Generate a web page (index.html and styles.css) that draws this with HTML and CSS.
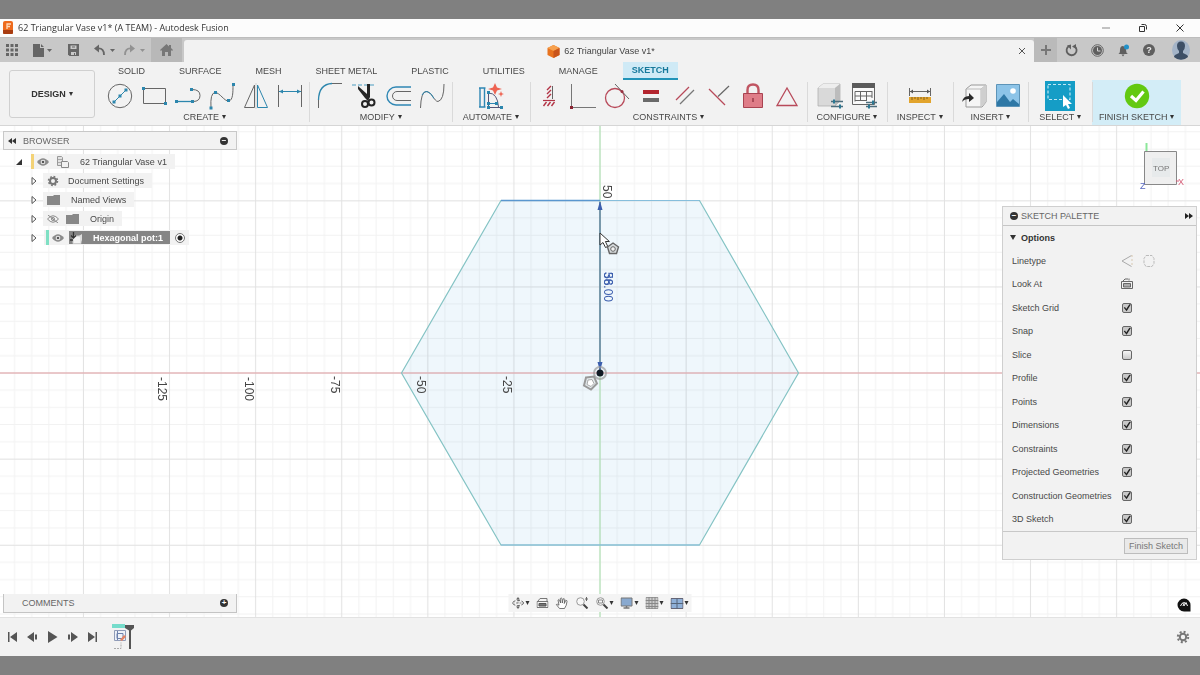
FILE: index.html
```html
<!DOCTYPE html>
<html lang="en">
<head>
<meta charset="utf-8">
<title>62 Triangular Vase v1* (A TEAM) - Autodesk Fusion</title>
<link rel="stylesheet" href="styles.css">
</head>
<body>
<div class="app">
  <header class="titlebar">
    <svg class="app-logo" width="12" height="14" viewBox="0 0 12 14"><rect x="1" y="0" width="10" height="13" rx="2" fill="#ee6a1c"/><path d="M1 9h10v3q0 1-1 1H2q-1 0-1-1z" fill="#a83c10"/><path d="M5 8V3h4M5 5.500h3" stroke="#ffd9b8" stroke-width="1.300" fill="none"/></svg>
    <span class="app-title">62 Triangular Vase v1* (A TEAM) - Autodesk Fusion</span>
    <div class="window-buttons">
      <button aria-label="Minimize"><svg width="10" height="10" viewBox="0 0 10 10"><path d="M1 5h8" stroke="#888"/></svg></button>
      <button aria-label="Restore"><svg width="10" height="10" viewBox="0 0 10 10"><path d="M1.500 3.500h5v5h-5zM3.500 1.500h3q2 0 2 2v3" fill="none" stroke="#333"/></svg></button>
      <button aria-label="Close"><svg width="10" height="10" viewBox="0 0 10 10"><path d="M1.500 1.500l7 7m0-7l-7 7" stroke="#333"/></svg></button>
    </div>
  </header>

  <div class="tabstrip">
    <div class="quick">
      <button aria-label="Data panel"><svg width="12" height="12" viewBox="0 0 12 12" fill="#666"><path d="M0 0h3v3H0zM4.500 0h3v3h-3zM9 0h3v3H9zM0 4.500h3v3H0zM4.500 4.500h3v3h-3zM9 4.500h3v3H9zM0 9h3v3H0zM4.500 9h3v3h-3zM9 9h3v3H9z"/></svg></button>
      <button aria-label="File"><svg width="19" height="13" viewBox="0 0 19 13" fill="#666"><path d="M0 0h7v4h4v9H0zM8 0l3 3H8z"/><path d="M14 5h5l-2.500 3z"/></svg></button>
      <button aria-label="Save"><svg width="11" height="12" viewBox="0 0 11 12"><path d="M0 0h11v12H1.500L0 10.500z" fill="#666"/><path d="M2.500 1.500h6V5h-6z" fill="#c9c9c9"/><path d="M3 8h5v3H3z" fill="#c9c9c9"/><path d="M4 2.500h3v1H4zM6 9h1v2H6z" fill="#666"/></svg></button>
      <button class="undo" aria-label="Undo"><svg width="21" height="12" viewBox="0 0 21 12"><path d="M4 4.500q6-.5 6 6.500" fill="none" stroke="#666" stroke-width="1.800"/><path d="M0 4.500L5 .5v8z" fill="#666"/><path d="M16 5h5l-2.500 3z" fill="#666"/></svg></button>
      <button aria-label="Redo"><svg width="21" height="12" viewBox="0 0 21 12" fill="#929292"><path d="M11 4.500L6 .5v8z"/><path d="M7 4.500q-6-.5-6 6.500" fill="none" stroke="#929292" stroke-width="1.800"/><path d="M16 5h5l-2.500 3z"/></svg></button>
    </div>
    <button class="home" aria-label="Home"><svg width="13" height="12" viewBox="0 0 13 12" fill="#777"><path d="M6.500 0L0 6l1 1 1-1v6h3V8h3v4h3V6l1 1 1-1-2-2V1H9v1.500z"/></svg></button>
    <div class="doc-tab">
      <div class="doc-name"><svg width="13" height="13" viewBox="0 0 13 13"><path d="M6.500 0L12.500 3v7l-6 3-6-3V3z" fill="#e8731f"/><path d="M6.500 0l6 3-6 3-6-3z" fill="#f7a14e"/><path d="M6.500 6l6-3v7l-6 3z" fill="#c9541b"/></svg><span>62 Triangular Vase v1*</span></div>
      <button class="doc-close" aria-label="Close document"><svg width="8" height="8" viewBox="0 0 8 8"><path d="M1 1l6 6m0-6L1 7" stroke="#555"/></svg></button>
    </div>
    <button class="new-tab" aria-label="New design"><svg width="10" height="10" viewBox="0 0 10 10"><path d="M5 0v10M0 5h10" stroke="#777" stroke-width="2"/></svg></button>
    <div class="status">
      <button aria-label="Extensions"><svg width="13" height="13" viewBox="0 0 13 13"><path d="M4 2a5 5 0 1 0 5.500.2" fill="none" stroke="#5f5f5f" stroke-width="1.800"/><path d="M2 1.500l4-1v5zM11 0v5L7 2.500z" fill="#5f5f5f"/></svg></button>
      <button aria-label="Job status"><svg width="13" height="13" viewBox="0 0 13 13"><circle cx="6.500" cy="6.500" r="5.800" fill="none" stroke="#666"/><circle cx="6.500" cy="6.500" r="4.500" fill="#5f5f5f"/><path d="M6.500 3.500v3.500h3" stroke="#d5d5d5" fill="none"/></svg></button>
      <button aria-label="Notifications"><svg width="13" height="13" viewBox="0 0 13 13"><path d="M6 2q-3 0-3 4T1 10h10q-2-1-2-4T6 2zM4.500 10.500h3L6 12.500z" fill="#5f5f5f"/><circle cx="9.500" cy="3" r="2.500" fill="#2191c9"/></svg></button>
      <button class="help" aria-label="Help">?</button>
      <button class="account" aria-label="Account"><svg width="18" height="20" viewBox="0 0 18 20"><ellipse cx="9" cy="10" rx="9" ry="10" fill="#a4b4c8"/><path d="M9 1.500q4 0 4 4.500 0 3-2 5v2l4 2q1 1 1 2-3 2.800-7 2.800T2 17q0-1 1-2l4-2v-2Q5 9 5 6q0-4.500 4-4.500z" fill="#3d4f66"/></svg></button>
    </div>
  </div>

  <div class="ribbon">
    <button class="workspace">DESIGN <i class="caret"></i></button>
    <div class="ribbon-main">
      <nav class="ribbon-tabs">
        <button>SOLID</button><button>SURFACE</button><button>MESH</button><button>SHEET METAL</button><button>PLASTIC</button><button>UTILITIES</button><button>MANAGE</button><button class="active">SKETCH</button>
      </nav>
      <div class="groups">
        <section class="group g-create">
          <div class="tools">
            <svg viewBox="0 0 28 28"><circle cx="14" cy="14" r="11.700" fill="none" stroke="#666"/><path d="M8 20L20 8" stroke="#2c86ad"/><path d="M6.500 18.500h3v3h-3zM12.500 12.500h3v3h-3zM18.500 6.500h3v3h-3z" fill="#2c86ad"/></svg>
            <svg viewBox="0 0 28 28"><path d="M3.500 6.500h22v15h-22z" fill="none" stroke="#666"/><path d="M2 5h3v3H2zM24 20h3v3h-3z" fill="#2c86ad"/></svg>
            <svg viewBox="0 0 28 28"><path d="M2 19.500h17" stroke="#2c86ad" stroke-width="1.300"/><path d="M18 7.500q8 0 8 6t-7 6" fill="none" stroke="#666"/><path d="M1 18h3v3H1zM17 18h3v3h-3zM16 6h3v3h-3z" fill="#2c86ad"/></svg>
            <svg viewBox="0 0 28 28"><path d="M3 26Q2 11 7 10.500c5 0 9 9 14 8.500 4-1 4-9 4-16" fill="none" stroke="#666"/><path d="M1.500 24.500h3v3h-3zM6 9h3v3H6zM19 17h3v3h-3zM24 1h3v3h-3z" fill="#2c86ad"/></svg>
            <svg viewBox="0 0 28 28"><path d="M12.500 3v22.500H2.500z" fill="none" stroke="#666"/><path d="M15.500 3v22.500h10z" fill="none" stroke="#2c86ad"/><path d="M14 1v26" stroke="#bbb" stroke-width=".6"/></svg>
            <svg viewBox="0 0 28 28"><path d="M2.500 3v22M25.500 3v22" stroke="#666"/><path d="M3 9.500h22" stroke="#2c86ad"/><path d="M3 9.500l4-2v4zM25 9.500l-4-2v4z" fill="#2c86ad"/></svg>
          </div><button class="label">CREATE<i class="caret"></i></button>
        </section>
        <section class="group g-modify">
          <div class="tools">
            <svg viewBox="0 0 28 28"><path d="M2.500 18v8M16 1.500h10" stroke="#666"/><path d="M2.500 18Q3 2 16 1.500" fill="none" stroke="#2c86ad" stroke-width="1.300"/></svg>
            <svg viewBox="0 0 28 28"><path d="M2 3h24" stroke="#4a9cc0" stroke-dasharray="4 2"/><path d="M17 2h3v13l-2 4-3-3L8 7V4l9 8z" fill="#252525"/><circle cx="15" cy="22" r="3" fill="none" stroke="#252525" stroke-width="2"/><circle cx="21.500" cy="20.500" r="3" fill="none" stroke="#252525" stroke-width="2"/></svg>
            <svg viewBox="0 0 28 28"><path d="M27 5H12a9 9 0 0 0 0 18h15" fill="none" stroke="#2f87b4" stroke-width="1.400"/><path d="M27 9.500H13a4.500 4.500 0 0 0 0 9h14" fill="none" stroke="#666"/></svg>
            <svg viewBox="0 0 28 28"><path d="M2.500 26Q3 10 8 9.500c6 0 8 10 12 10Q26 18 26 2" fill="none" stroke="#666"/><path d="M4 13q2-4 5-3.500 4 1 7 7" fill="none" stroke="#2c86ad"/></svg>
          </div><button class="label">MODIFY<i class="caret"></i></button>
        </section>
        <section class="group g-automate">
          <div class="tools">
            <svg viewBox="0 0 28 28"><path d="M3 6v19M7.500 6v19M2 6h6.500M2 25h6.500" stroke="#2f87b4" stroke-width="1.400"/><path d="M11 25.500h14M11.500 10v15.500M11.500 11q9 0 10 14" fill="none" stroke="#557"/><path d="M12 21.500h8" stroke="#2f87b4"/><path d="M10 9h3v3h-3zM10 24h3v3h-3zM10 20h3v3h-3zM23 24h3v3h-3zM18 20h3v3h-3z" fill="#2c86ad"/><path d="M18 1l2 4.500L25 7l-5 1.500L18 13l-2-4.500L11 7l5-1.500zM24 9l.8 2.200L27 12l-2.200.8L24 15l-.8-2.200L21 12l2.200-.8z" fill="#ee6352"/></svg>
          </div><button class="label">AUTOMATE<i class="caret"></i></button>
        </section>
        <section class="group g-constraints">
          <div class="tools">
            <svg viewBox="0 0 28 28"><path d="M17.500 4v13" stroke="#666"/><path d="M12 8l4-4M12 12l4-4M12 16l4-4M8.500 24l3-4M12.500 24l3-4M16.500 24l3-4" stroke="#b23446" stroke-width="1.400"/><path d="M8 18.500h12" stroke="#b23446" stroke-width="1.200"/></svg>
            <svg viewBox="0 0 28 28"><path d="M2.500 2v23.500H27" fill="none" stroke="#777"/><path d="M1 24h3v3H1z" fill="#8c2634"/></svg>
            <svg viewBox="0 0 28 28"><circle cx="12" cy="16" r="9.500" fill="none" stroke="#b84a5a" stroke-width="1.300"/><path d="M12 2l14 15" stroke="#666"/><circle cx="19" cy="9.500" r="1.500" fill="#9c3040"/></svg>
            <svg viewBox="0 0 28 28"><path d="M6 8h16v4H6z" fill="#b3252e"/><path d="M6 16h16v4H6z" fill="#6a6a6a"/></svg>
            <svg viewBox="0 0 28 28"><path d="M5 18L18 5" stroke="#b84a5a" stroke-width="1.200"/><path d="M9 22L23 8" stroke="#777" stroke-width="1.200"/></svg>
            <svg viewBox="0 0 28 28"><path d="M4 7l16 16" stroke="#b84a5a" stroke-width="1.200"/><path d="M13 14.500L24 4" stroke="#666" stroke-width="1.200"/></svg>
            <svg viewBox="0 0 28 28"><path d="M8.500 12V8q0-5.500 5.500-5.500T19.500 8v4" fill="none" stroke="#c05562" stroke-width="2.400"/><path d="M4.500 11.500h19v14h-19z" fill="#df7d88" stroke="#a94351"/><path d="M14 16v4" stroke="#983b48" stroke-width="1.500"/></svg>
            <svg viewBox="0 0 28 28"><path d="M14 6L24 23.500H4z" fill="none" stroke="#b84a5a" stroke-width="1.300"/></svg>
          </div><button class="label">CONSTRAINTS<i class="caret"></i></button>
        </section>
        <section class="group g-configure">
          <div class="tools">
            <svg viewBox="0 0 28 28"><path d="M2 6l5-4h17v17l-5 5H2z" fill="#d9d9d9" stroke="#aaa" stroke-width=".7"/><path d="M2 6l5-4h17l-5 4z" fill="#eee"/><path d="M19 6l5-4v17l-5 5z" fill="#bcbcbc"/><path d="M15 19.500h12M15 24.500h12" stroke="#4d6d7c" stroke-width="1.500"/><path d="M18 17.500v4M24 22.500v4" stroke="#2c7893" stroke-width="2"/></svg>
            <svg viewBox="0 0 28 28"><path d="M2.500 2.500h22v20h-22z" fill="#fafafa" stroke="#666"/><path d="M2 1h23v5H2z" fill="#5b5b5b"/><path d="M5 9.500h17M5 14h17M5 18.500h11M5 9.500v10M10.500 9v10M16.500 9v10M22 9v7" stroke="#666"/><path d="M16 20.500h11M16 24.500h11" stroke="#4d6d7c" stroke-width="1.500"/><path d="M23 18.500v4M19 22.500v4" stroke="#2c7893" stroke-width="2"/></svg>
          </div><button class="label">CONFIGURE<i class="caret"></i></button>
        </section>
        <section class="group g-inspect">
          <div class="tools">
            <svg viewBox="0 0 28 28"><path d="M3.500 6v8M24.500 6v8M4 9.500h20" stroke="#666"/><path d="M4 9.500l3-2v4zM24 9.500l-3-2v4z" fill="#555"/><path d="M3 15h22v6H3z" fill="#e2a42c"/><path d="M6 15v3M9 15v2M12 15v3M15 15v2M18 15v3M21 15v2" stroke="#87611b"/></svg>
          </div><button class="label">INSPECT<i class="caret"></i></button>
        </section>
        <section class="group g-insert">
          <div class="tools">
            <svg viewBox="0 0 28 28"><path d="M6 7l5-4h15v17l-4 5H6z" fill="#f5f5f5" stroke="#999"/><path d="M6 7h15v18M21 7l5-4" fill="none" stroke="#bbb"/><path d="M21 7l5-4v17l-5 5z" fill="#cfcfcf"/><path d="M2 20q1-6 7-6v-3l5 5-5 4v-3q-5 0-7 3z" fill="#2a2a2a"/></svg>
            <svg viewBox="0 0 28 28"><path d="M2.500 2.500h23v22h-23z" fill="#8dc4e8" stroke="#5d94b8"/><circle cx="19" cy="9" r="2.800" fill="#fff"/><path d="M3 20l7-8 6 8 3-3 6 5v2H3z" fill="#2f78a6"/></svg>
          </div><button class="label">INSERT<i class="caret"></i></button>
        </section>
        <section class="group g-select">
          <div class="tools">
            <svg class="big" viewBox="0 0 30 30"><path d="M0 0h30v30H0z" fill="#159dc6"/><path d="M3 3.500h22v15H3z" fill="none" stroke="#bfe7f4" stroke-width="1.200" stroke-dasharray="3 2"/><path d="M18 14v12l3-2 2 4 2-1-2-4h4z" fill="#fff"/></svg>
          </div><button class="label">SELECT<i class="caret"></i></button>
        </section>
        <section class="group g-finish">
          <div class="tools">
            <svg viewBox="0 0 28 28"><circle cx="14" cy="14" r="12.200" fill="#63c911"/><path d="M8 14l5 4.500L20.500 9.500" fill="none" stroke="#fff" stroke-width="3.200"/></svg>
          </div><button class="label">FINISH SKETCH<i class="caret"></i></button>
        </section>
      </div>
    </div>
  </div>

  <main class="canvas">
    <svg class="drawing" viewBox="0 0 1200 491" preserveAspectRatio="xMidYMid slice">
      <defs>
        <pattern id="grid" x="557" y="204" width="86.100" height="86.100" patternUnits="userSpaceOnUse">
          <path d="M8.500 0v86.100M25.700 0v86.100M60.200 0v86.100M77.400 0v86.100M0 8.500h86.100M0 25.700h86.100M0 60.200h86.100M0 77.400h86.100" stroke="#f2f2f2"/>
          <path d="M43 0v86.100M0 43h86.100" stroke="#e1e1e1"/>
        </pattern>
      </defs>
      <path d="M401.500 247L501 74.500H699.500L798.500 247 699.500 419H501z" fill="#eff7fc"/>
      <rect class="grid-layer" width="1200" height="491" fill="url(#grid)"/>
      <path d="M0 247H1200" stroke="#e39fa3"/>
      <path d="M600 0V491" stroke="#a9e3ad"/>
      <path d="M401.500 247L501 74.500H699.500L798.500 247 699.500 419H501z" fill="none" stroke="#84c3c4" stroke-width="1.200"/>
      <path d="M501 74.500H600" stroke="#5a97cf" stroke-width="1.500"/><path d="M600 74.500H699.500M501 419H699.500" stroke="#86bedc" stroke-width="1.200"/>
      <path d="M600 76V246" stroke="#5f7f9f" stroke-width="1.500"/>
      <path d="M600 75l-2.500 9h5zM600 245l-2.500-9h5z" fill="#3c5fae"/>
      <g class="ruler">
        <text transform="translate(158 251) rotate(90)">-125</text>
        <text transform="translate(245 251) rotate(90)">-100</text>
        <text transform="translate(331 250) rotate(90)">-75</text>
        <text transform="translate(417 250) rotate(90)">-50</text>
        <text transform="translate(503 250) rotate(90)">-25</text>
        <text transform="translate(603 59) rotate(90)">50</text>
      </g>
      <g class="dimension">
        <text transform="translate(604 146) rotate(90)">58.00</text>
        <text transform="translate(604 146) rotate(90)">36</text>
      </g>
      <circle cx="600" cy="247" r="6" fill="none" stroke="#9a9a9a" stroke-width="2" opacity=".7"/><circle cx="600" cy="247" r="3.500" fill="#111a24"/>
      <path d="M586 251.500l8-1 3 7-6 6-7-4z" fill="#e4eaed" stroke="#999" stroke-width="2"/><path d="M588 254l4-.5 2 4-3 3-4-2z" fill="#fff" stroke="#aaa"/>
      <path d="M600 107v12l3-2.500 2.500 5 2.300-1-2.400-5h4z" fill="#fff" stroke="#333"/>
      <path d="M613 117l5.500 4-2 6.500h-7l-2-6.500z" fill="#d7dbdd" stroke="#666" stroke-width="1.400"/><circle cx="613" cy="123" r="2.300" fill="#f2f2f2" stroke="#666"/>
    </svg>

    <aside class="browser">
      <div class="panel-head"><svg width="8" height="6" viewBox="0 0 8 6" fill="#333"><path d="M4 0v6L0 3zM8 0v6L4 3z"/></svg><h2>BROWSER</h2><button class="dot" aria-label="Collapse browser">−</button></div>
      <ul class="tree">
        <li><svg class="arrow" viewBox="0 0 8 8"><path d="M7 1v6H1z" fill="#333"/></svg><div class="node lv0"><i class="stripe yellow"></i><svg class="eye" viewBox="0 0 12 8"><path d="M0 4q6-7.500 12 0-6 7.500-12 0z" fill="#8b8b8b"/><circle cx="6" cy="4" r="2.300" fill="#eee"/><circle cx="6" cy="4" r="1.300" fill="#555"/></svg><svg class="ico" viewBox="0 0 13 12"><path d="M1.500.5h4l1 1v8h-5z" fill="#e2e2e2" stroke="#999"/><path d="M2 3.500h4M2 6.500h4" stroke="#aaa"/><path d="M5.500 5.500h6l1 1v5h-7z" fill="#f1f1f1" stroke="#888"/></svg><span>62 Triangular Vase v1</span></div></li>
        <li class="sub"><svg class="arrow" viewBox="0 0 8 8"><path d="M2 .5v7L6 4z" fill="#fff" stroke="#555"/></svg><div class="node doc"><svg class="ico" viewBox="0 0 13 12"><circle cx="6" cy="6" r="3" fill="none" stroke="#777" stroke-width="2"/><circle cx="6" cy="6" r="4.500" fill="none" stroke="#777" stroke-width="1.500" stroke-dasharray="1.800 1.730"/></svg><span>Document Settings</span></div></li>
        <li class="sub"><svg class="arrow" viewBox="0 0 8 8"><path d="M2 .5v7L6 4z" fill="#fff" stroke="#555"/></svg><div class="node"><svg class="ico" viewBox="0 0 13 12"><path d="M0 2h6l1-1h6v10H0z" fill="#888"/></svg><span>Named Views</span></div></li>
        <li class="sub"><svg class="arrow" viewBox="0 0 8 8"><path d="M2 .5v7L6 4z" fill="#fff" stroke="#555"/></svg><div class="node origin"><svg class="eye" viewBox="0 0 12 8"><path d="M.5 4q5.500-6.500 11 0-5.500 6.500-11 0zM1 0l10 8" fill="none" stroke="#888"/><circle cx="6" cy="4" r="1.500" fill="none" stroke="#888"/></svg><svg class="ico" viewBox="0 0 13 12"><path d="M0 2h6l1-1h6v10H0z" fill="#888"/></svg><span>Origin</span></div></li>
        <li class="sub"><svg class="arrow" viewBox="0 0 8 8"><path d="M2 .5v7L6 4z" fill="#fff" stroke="#555"/></svg><div class="node pot"><i class="stripe green"></i><svg class="eye" viewBox="0 0 12 8"><path d="M0 4q6-7.500 12 0-6 7.500-12 0z" fill="#8b8b8b"/><circle cx="6" cy="4" r="2.300" fill="#eee"/><circle cx="6" cy="4" r="1.300" fill="#555"/></svg><div class="selected"><svg class="ico" viewBox="0 0 13 12"><path d="M4 4h8v7.500H4z" fill="#f4f4f4" stroke="#ccc"/><path d="M10 4l3-2v8" fill="#ddd"/><path d="M4.500 0v6M2 3.500l2.500 2.500L7 3.500M1 8h3" stroke="#333" stroke-width="1.300" fill="none"/></svg><span>Hexagonal pot:1</span></div><input type="radio" checked aria-label="Activate Hexagonal pot:1"></div></li>
      </ul>
    </aside>

    <svg class="viewcube" viewBox="0 0 46 50"><path d="M7.500 0v8" stroke="#8ce79a" stroke-width="2"/><path d="M5.500 8.500h32v33h-32z" fill="#efefef" stroke="#888"/><path d="M13 15h18v19H13z" fill="#e7eaeb"/><text x="14" y="28" class="cube-top">TOP</text><text x="39" y="42" class="cube-x">X</text><path d="M37 38h3" stroke="#d6607a"/><text x="1" y="46" class="cube-z">Z</text></svg>

    <aside class="palette">
      <div class="palette-head"><button class="dot" aria-label="Collapse palette">−</button><h2>SKETCH PALETTE</h2><svg width="8" height="6" viewBox="0 0 8 6" fill="#222"><path d="M0 0l4 3-4 3zM4 0l4 3-4 3z"/></svg></div>
      <h3><i class="caret"></i>Options</h3>
      <div class="options">
        <div class="row"><span>Linetype</span><button aria-label="Construction"><svg width="12" height="14" viewBox="0 0 12 14"><path d="M10.500 1.500L1 7l9.500 5.500" fill="none" stroke="#aaa"/><path d="M11 1v12" stroke="#d8c9b2" stroke-dasharray="2 2"/></svg></button><button aria-label="Centerline"><svg width="12" height="14" viewBox="0 0 12 14"><path d="M3 1.500h6l2 3v5l-2 3H3l-2-3v-5z" fill="none" stroke="#bbb" stroke-dasharray="3 1"/></svg></button></div>
        <div class="row"><span>Look At</span><button aria-label="Look At"><svg width="12" height="12" viewBox="0 0 12 12"><path d="M.5 3.500h11v7H.5zM2 3l2-2h3M8 2.500V.5" fill="none" stroke="#666"/><path d="M2.500 5.500h7v3.500h-7z" fill="#aaa" stroke="#666"/></svg></button></div>
        <div class="row"><label for="o1">Sketch Grid</label><input id="o1" type="checkbox" checked></div>
        <div class="row"><label for="o2">Snap</label><input id="o2" type="checkbox" checked></div>
        <div class="row"><label for="o3">Slice</label><input id="o3" type="checkbox"></div>
        <div class="row"><label for="o4">Profile</label><input id="o4" type="checkbox" checked></div>
        <div class="row"><label for="o5">Points</label><input id="o5" type="checkbox" checked></div>
        <div class="row"><label for="o6">Dimensions</label><input id="o6" type="checkbox" checked></div>
        <div class="row"><label for="o7">Constraints</label><input id="o7" type="checkbox" checked></div>
        <div class="row"><label for="o8">Projected Geometries</label><input id="o8" type="checkbox" checked></div>
        <div class="row"><label for="o9">Construction Geometries</label><input id="o9" type="checkbox" checked></div>
        <div class="row"><label for="o10">3D Sketch</label><input id="o10" type="checkbox" checked></div>
      </div>
      <div class="palette-foot"><button>Finish Sketch</button></div>
    </aside>

    <div class="comments"><h2>COMMENTS</h2><button class="dot" aria-label="Expand comments">+</button></div>

    <div class="navbar">
      <button aria-label="Orbit"><svg width="13" height="12" viewBox="0 0 13 12"><path d="M6.500 1v10M1 6h11" stroke="#888" stroke-dasharray="2 1.500"/><ellipse cx="6.500" cy="6" rx="5.500" ry="2.500" fill="none" stroke="#666" stroke-dasharray="3 1.500"/><path d="M6.500 0l2 2.500h-4zM6.500 12l2-2.500h-4z" fill="#666"/></svg></button><i class="caret"></i>
      <button aria-label="Look At"><svg width="12" height="12" viewBox="0 0 12 12"><path d="M.5 4.500h11v6H.5zM1.500 4l2-2.500h7V4" fill="none" stroke="#777"/><path d="M2.500 6.500h7V9h-7z" fill="#777" stroke="#555"/></svg></button>
      <button aria-label="Pan"><svg width="13" height="13" viewBox="0 0 13 13"><path d="M4 11.500L.8 7.500q.7-1 2.700.7L2.500 3q1-1 1.700.3L5 6 4.800 1.500q1-1 1.700 0L6.800 6l.8-4q1.200-1 1.600.3L8.800 6.500l1.400-3q1.500-.4 1.300 1-.3 4-2.500 7z" fill="#fff" stroke="#555" stroke-width=".8"/></svg></button>
      <button aria-label="Zoom"><svg width="13" height="12" viewBox="0 0 13 12"><circle cx="5" cy="4.500" r="3.800" fill="#f8f8f8" stroke="#999"/><path d="M8 7.500l4 4" stroke="#444" stroke-width="2"/><path d="M11 0v4M9.500 2h3" stroke="#666"/></svg></button>
      <button aria-label="Fit"><svg width="13" height="12" viewBox="0 0 13 12"><circle cx="5" cy="4.500" r="3.800" fill="#f8f8f8" stroke="#999"/><path d="M3 3h4v3H3z" fill="none" stroke="#888"/><path d="M8 7.500l4 4" stroke="#444" stroke-width="2"/></svg></button><i class="caret"></i>
      <button aria-label="Display settings"><svg width="13" height="12" viewBox="0 0 13 12"><path d="M.5 1h11v8H.5z" fill="#89a9cf" stroke="#777"/><path d="M3 11h6M6 9v2" stroke="#777" stroke-width="1.500"/></svg></button><i class="caret"></i>
      <button aria-label="Grid settings"><svg width="13" height="12" viewBox="0 0 13 12"><path d="M.5.500h12v11H.5z" fill="#ccc" stroke="#999"/><path d="M3.500 0v12M6.500 0v12M9.500 0v12M0 3.500h13M0 6.500h13M0 9.500h13" stroke="#888"/></svg></button><i class="caret"></i>
      <button aria-label="Viewports"><svg width="13" height="11" viewBox="0 0 13 11"><path d="M.5.500h12v10H.5z" fill="#8fb0d8" stroke="#667"/><path d="M6.500 0v11M0 5.500h13" stroke="#56657a"/></svg></button><i class="caret"></i>
    </div>
    <button class="assistant" aria-label="Assistant"><svg width="14" height="14" viewBox="0 0 14 14"><path d="M7 .5A6.500 6.500 0 1 1 7 13.500 6.500 6.500 0 0 1 7 .5zM7 7h6.500v6.500H7z" fill="#111"/><path d="M3.500 8q1-3.500 4-3.500L6 8M7 8l2-3.500L10.500 8" fill="none" stroke="#fff"/></svg></button>
  </main>

  <footer class="timeline">
    <div class="playback">
      <button aria-label="To start"><svg width="11" height="10" viewBox="0 0 11 10" fill="#555"><path d="M1 0h1.500v10H1zM10 0v10L3 5z"/></svg></button>
      <button aria-label="Step back"><svg width="11" height="10" viewBox="0 0 11 10" fill="#555"><path d="M7 0v10L0 5zM8 2.500h2v5H8z"/></svg></button>
      <button aria-label="Play"><svg width="11" height="12" viewBox="0 0 11 12" fill="#555"><path d="M1 0l9.500 6L1 12z"/></svg></button>
      <button aria-label="Step forward"><svg width="11" height="10" viewBox="0 0 11 10" fill="#555"><path d="M4 0v10l7-5zM1 2.500h2v5H1z"/></svg></button>
      <button aria-label="To end"><svg width="11" height="10" viewBox="0 0 11 10" fill="#555"><path d="M8.500 0H10v10H8.500zM1 0v10l7-5z"/></svg></button>
    </div>
    <svg class="feature" width="24" height="28" viewBox="0 0 24 28"><path d="M1 1h13v4H1z" fill="#76dccb"/><path d="M3.500 7.500h11v10h-11z" fill="#eef2f8" stroke="#909cb8"/><path d="M6 10.500h6v5H6zM6.500 8v9" fill="none" stroke="#6f83ad"/><path d="M9 17l4-5 2 1.500-4 4.500z" fill="#e48464"/><path d="M3 25.500h7v-6" fill="none" stroke="#aaa" stroke-dasharray="2 1"/><path d="M14 2h9v3l-3 2.500V26h-2V7.500L14 5z" fill="#555"/></svg>
    <button class="settings" aria-label="Timeline settings"><svg width="14" height="14" viewBox="0 0 14 14"><circle cx="7" cy="7" r="3.200" fill="none" stroke="#777" stroke-width="2"/><circle cx="7" cy="7" r="5.200" fill="none" stroke="#777" stroke-width="2" stroke-dasharray="2 2.084"/></svg></button>
  </footer>
</div>
</body>
</html>
```
FILE: styles.css
```css
* { box-sizing: border-box; }
body { margin: 0; background: #808080; color: #484848; font: 9px/12px "Liberation Sans", Arial, sans-serif; }
button { margin: 0; padding: 0; border: 0; background: none; color: inherit; font: inherit; display: inline-flex; align-items: center; justify-content: center; }
svg { display: block; flex: none; }
h2, h3, ul { margin: 0; padding: 0; font-size: 9px; }
h2 { font-weight: 400; color: #666; }
.app { min-height: 100vh; padding: 19px 0; display: flex; flex-direction: column; }
.caret { display: inline-block; flex: none; border: solid transparent; border-width: 4px 2px 0; border-top-color: #333; margin-left: 3px; }
.dot { width: 8px; height: 8px; border-radius: 50%; background: #333; color: #fff; font: bold 8px/8px "Liberation Sans", Arial, sans-serif; }

.titlebar { height: 18px; background: #fcfcfc; display: flex; align-items: center; padding: 0 15px 0 2px; gap: 4px; }
.app-title { flex: 1; color: #333; font: 9px/12px "Open Sans", sans-serif; }
.window-buttons { display: flex; gap: 27px; }

.tabstrip { height: 25px; background: #c8c8c8; display: flex; align-items: stretch; border-top: 1px solid #bdbdbd; }
.quick { width: 151px; display: flex; align-items: center; justify-content: space-between; padding: 0 6px; }
.undo { margin-right: -6px; }
.home { width: 31px; background: #b8b8b8; margin-right: 2px; }
.doc-tab { flex: 1; margin-top: 2px; background: #f2f2f2; border-radius: 3px 3px 0 0; display: flex; align-items: center; padding-right: 8px; }
.doc-name { flex: 1; display: flex; align-items: center; justify-content: center; gap: 4px; color: #444; }
.new-tab { width: 23px; background: #bababa; }
.status { display: flex; align-items: center; gap: 13px; padding: 0 10px 0 8px; }
.help { width: 12px; height: 12px; border-radius: 50%; background: #5f5f5f; color: #eee; font-weight: 700; }
.account { margin-left: 4px; }

.ribbon { height: 64px; background: #f2f2f2; border-bottom: 1px solid #d6d6d6; display: flex; }
.workspace { width: 86px; height: 48px; margin: 8px 2px 0 9px; border: 1px solid #d0d0d0; border-radius: 3px; font-weight: 700; color: #333; }
.ribbon-main { flex: 1; min-width: 0; display: flex; flex-direction: column; }
.ribbon-tabs { height: 18px; display: flex; gap: 16px; padding-left: 12px; }
.ribbon-tabs button { padding: 0 9px; }
.ribbon-tabs .active { background: #cfeaf6; color: #16799c; font-weight: 700; border-bottom: 2px solid #2193b8; }
.groups { flex: 1; display: flex; padding-right: 19px; }
.group { position: relative; display: flex; flex-direction: column; align-items: center; flex-basis: 0; min-width: 0; }
.group + .group::before { content: ""; position: absolute; left: 0; top: 2px; width: 1px; height: 40px; background: #dadada; }
.tools { display: flex; gap: 6px; height: 31px; align-items: center; }
.tools svg { width: 28px; height: 28px; }
.tools .big { width: 30px; height: 30px; }
.label { height: 12px; white-space: nowrap; }
.g-create { flex-grow: 210; padding-left: 3px; }
.g-modify { flex-grow: 143; }
.g-automate { flex-grow: 78; }
.g-constraints { flex-grow: 278; }
.g-configure { flex-grow: 80; }
.g-inspect { flex-grow: 66; }
.g-insert { flex-grow: 76; }
.g-select { flex-grow: 64; }
.g-finish { flex-grow: 89; background: #d3edf7; }

.canvas { position: relative; flex: 1; min-height: 480px; background: #fff; overflow: hidden; }
.drawing { position: absolute; inset: 0; width: 100%; height: 100%; }
.grid-layer { mix-blend-mode: multiply; }
.ruler text, .dimension text { font: 12px "Liberation Sans", Arial, sans-serif; fill: #444; }
.dimension text { fill: #3d5fae; }

.browser { position: absolute; left: 3px; top: 5px; width: 234px; }
.panel-head { height: 19px; display: flex; align-items: center; gap: 7px; padding: 0 8px 0 4px; background: #f2f2f2; border: 1px solid #c8c8c8; }
.panel-head h2 { flex: 1; }
.tree { list-style: none; padding: 2px 0 0 12px; }
.tree li { height: 19px; display: flex; align-items: center; gap: 8px; }
.tree .sub { padding-left: 15px; }
.arrow { width: 8px; height: 8px; }
.node { height: 15px; display: flex; align-items: center; gap: 11px; padding-right: 8px; background: #f2f2f2; }
.node.lv0 { gap: 7px; }
.node.lv0 span { padding-left: 4px; }
.sub .node { padding-left: 4px; margin-left: -3px; }
.sub .doc { gap: 8px; }
.sub .origin { gap: 7px; }
.origin span { padding-left: 4px; }
.sub .pot { gap: 5px; padding: 0 4px 0 2px; margin-left: -2px; }
.stripe { align-self: stretch; width: 3px; margin-right: -4px; }
.pot .stripe { margin-right: -2px; }
.yellow { background: #f3d276; }
.green { background: #7fe0c4; }
.eye { width: 12px; height: 8px; }
.ico { width: 13px; height: 12px; }
.selected { height: 13px; display: flex; align-items: center; gap: 11px; padding-right: 7px; background: #858585; color: #fff; font-weight: 700; }
input[type="radio"] { appearance: none; margin: 0; width: 10px; height: 10px; border: 1px solid #777; border-radius: 50%; background: radial-gradient(circle, #222 2px, #fff 3px); }

.viewcube { position: absolute; right: 15px; top: 17px; width: 46px; height: 50px; }
.cube-top { font: 8px "Liberation Sans", Arial, sans-serif; fill: #777; }
.cube-x { font: 9px "Liberation Sans", Arial, sans-serif; fill: #d6607a; }
.cube-z { font: 9px "Liberation Sans", Arial, sans-serif; fill: #5968c0; }

.palette { position: absolute; right: 3px; top: 80px; width: 195px; background: #f2f2f2; border: 1px solid #cfcfcf; }
.palette-head { height: 19px; display: flex; align-items: center; gap: 3px; padding: 0 3px 0 7px; border-bottom: 1px solid #c6c6c6; }
.palette-head h2 { flex: 1; }
.palette h3 { height: 23px; display: flex; align-items: center; gap: 5px; padding-left: 4px; color: #333; }
.palette h3 .caret { border-width: 5px 3px 0; }
.options { height: 282px; display: grid; grid-auto-rows: 1fr; padding-left: 9px; }
.row { display: flex; align-items: center; gap: 10px; }
.row > :first-child { width: 99px; white-space: nowrap; }
.row button { width: 12px; }
.row > :nth-child(2) { flex: none; }
input[type="checkbox"] { appearance: none; position: relative; margin: 0 0 0 1px; width: 10px; height: 10px; border: 1px solid #666; border-radius: 2px; background: linear-gradient(#f6f6f6, #c9c9c9); }
input[type="checkbox"]:checked { background: #c8c8c8; }
input[type="checkbox"]:checked::after { content: ""; position: absolute; inset: 0; background: #222; clip-path: polygon(10% 50%, 25% 40%, 40% 65%, 80% 5%, 98% 10%, 45% 95%); }
.palette-foot { height: 28px; display: flex; align-items: center; justify-content: flex-end; border-top: 1px solid #c8c8c8; padding-right: 8px; }
.palette-foot button { width: 64px; height: 16px; border: 1px solid #bdbdbd; background: #e9e9e9; color: #777; white-space: nowrap; }

.comments { position: absolute; left: 3px; bottom: 4px; width: 234px; height: 19px; padding: 0 8px 0 18px; display: flex; align-items: center; background: #f2f2f2; border: solid #c4c4c4; border-width: 0 1px 1px; }
.comments h2 { flex: 1; }
.navbar { position: absolute; left: 50%; bottom: 5px; transform: translateX(-50%); height: 18px; padding: 0 3px; display: flex; align-items: center; gap: 7px; background: #f4f4f4; }
.navbar .caret { margin-left: -6px; }
.assistant { position: absolute; right: 9px; bottom: 5px; }

.timeline { height: 39px; background: #f2f2f2; border-top: 1px solid #e2e2e2; display: flex; align-items: center; padding: 0 10px 0 7px; }
.playback { display: flex; align-items: center; gap: 9px; }
.feature { margin-left: 13px; }
.settings { margin-left: auto; }
```
